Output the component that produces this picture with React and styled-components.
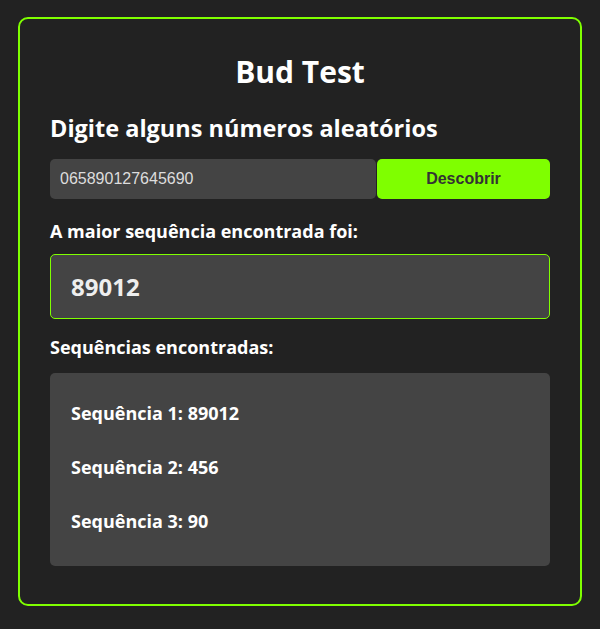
import React from "react";
import styled, { createGlobalStyle } from "styled-components";

const sequences = ["89012", "456", "90"];

function App() {
  return (
    <>
      <GlobalStyle />
      <Page>
        <Card>
          <Title>Bud Test</Title>
          <Subtitle>Digite alguns números aleatórios</Subtitle>
          <InputRow>
            <NumberInput defaultValue="065890127645690" />
            <FindButton>Descobrir</FindButton>
          </InputRow>
          <Label>A maior sequência encontrada foi:</Label>
          <ResultBox>89012</ResultBox>
          <Label>Sequências encontradas:</Label>
          <ListBox>
            {sequences.map((seq, i) => (
              <Item key={i}>
                Sequência {i + 1}: {seq}
              </Item>
            ))}
          </ListBox>
        </Card>
      </Page>
    </>
  );
}

const GlobalStyle = createGlobalStyle`
  html, body {
    margin: 0;
    background: #222222;
  }
  body {
    font-family: "Open Sans", "Noto Sans", sans-serif;
    color: #ffffff;
  }
`;

const Page = styled.div`
  padding: 17px 18px 24px;
`;

const Card = styled.div`
  border: 2px solid #7fff00;
  border-radius: 10px;
  padding: 32px 30px 38px;
  display: flex;
  flex-direction: column;
`;

const Title = styled.h1`
  margin: 0 0 18px;
  text-align: center;
  font-size: 30px;
  font-weight: 700;
  line-height: 42px;
`;

const Subtitle = styled.h2`
  margin: 0 0 14px;
  font-size: 23.5px;
  font-weight: 700;
  line-height: 34px;
`;

const InputRow = styled.div`
  display: flex;
  height: 40px;
  gap: 1px;
  margin-bottom: 20px;
`;

const NumberInput = styled.input`
  flex: 1;
  min-width: 0;
  border: none;
  outline: none;
  border-radius: 5px;
  background: #444444;
  color: #dddddd;
  padding: 0 10px;
  font-family: "Liberation Sans", Arial, sans-serif;
  font-size: 16px;
`;

const FindButton = styled.button`
  width: 173px;
  border: none;
  border-radius: 5px;
  background: #7fff00;
  color: #333333;
  font-family: "Liberation Sans", Arial, sans-serif;
  font-size: 16px;
  font-weight: 700;
  cursor: pointer;
`;

const Label = styled.div`
  font-size: 18px;
  font-weight: 700;
  line-height: 24px;
  margin-bottom: 11px;
`;

const ResultBox = styled.div`
  height: 63px;
  box-sizing: content-box;
  border: 1px solid #7fff00;
  border-radius: 5px;
  background: #444444;
  padding: 0 20px;
  display: flex;
  align-items: center;
  font-size: 24px;
  font-weight: 700;
  color: #eeeeee;
  margin-bottom: 16px;
`;

const ListBox = styled.div`
  margin-top: 3px;
  background: #444444;
  border-radius: 5px;
  padding: 28px 21px 33px;
  display: flex;
  flex-direction: column;
  gap: 30px;
`;

const Item = styled.div`
  font-size: 18px;
  font-weight: 700;
  line-height: 24px;
`;

export default App;
